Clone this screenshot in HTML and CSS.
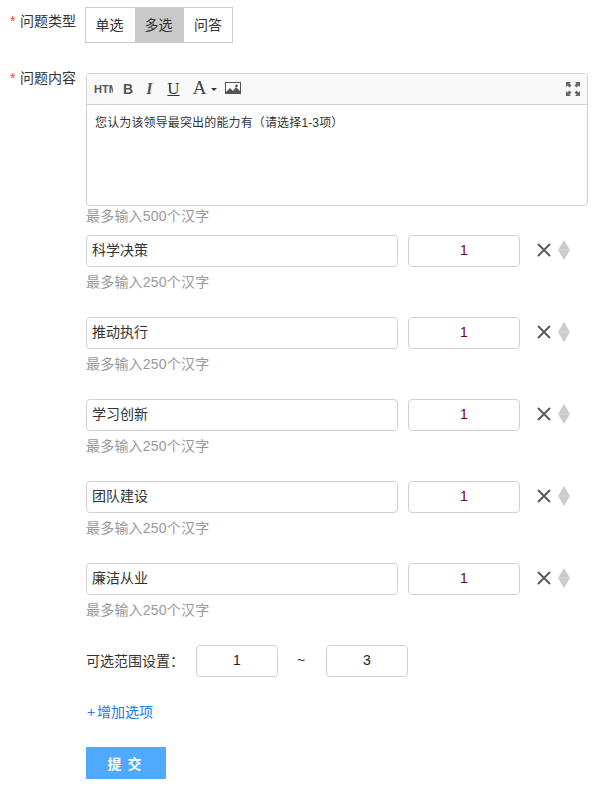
FILE: index.html
```html
<!DOCTYPE html>
<html lang="zh">
<head>
<meta charset="utf-8">
<title>问题</title>
<link rel="stylesheet" href="styles.css">
</head>
<body>
<form class="form">
  <div class="field type-field">
    <label class="label"><span class="star">*</span>问题类型</label>
    <div class="seg">
      <button type="button" class="seg-btn">单选</button>
      <button type="button" class="seg-btn active">多选</button>
      <button type="button" class="seg-btn">问答</button>
    </div>
  </div>
  <div class="field">
    <label class="label label-content"><span class="star">*</span>问题内容</label>
    <div class="body">
      <div class="editor">
        <div class="toolbar">
          <span class="tool html">HTML</span>
          <span class="tool bold">B</span>
          <span class="tool ital">I</span>
          <span class="tool under">U</span>
          <span class="tool font">A</span>
          <svg class="caret" width="6" height="3" viewBox="0 0 6 3"><path d="M0 0h6L3 3z" fill="#333"/></svg>
          <svg class="pic" width="16" height="12" viewBox="0 0 16 12"><path fill-rule="evenodd" fill="#555" d="M0 0h16v12H0zM1 1v9l4-4 3 3 3-4 4 4V1zM11.500 2.500a1.300 1.300 0 1 0 .01 0z"/></svg>
          <svg class="full" width="14" height="14" viewBox="0 0 14 14"><path fill="#666" d="M0 0h5L3.500 1.500 5.500 3.500 3.500 5.500 1.500 3.500 0 5zM14 0v5L12.500 3.500 10.500 5.500 8.500 3.500 10.500 1.500 9 0zM0 14V9L1.500 10.500 3.500 8.500 5.500 10.500 3.500 12.500 5 14zM14 14H9L10.500 12.500 8.500 10.500 10.500 8.500 12.500 10.500 14 9z"/></svg>
        </div>
        <div class="editor-text">您认为该领导最突出的能力有（请选择1-3项）</div>
      </div>
      <p class="hint hint-main">最多输入500个汉字</p>

      <div class="option">
        <div class="opt-row">
          <input class="input opt-name" value="科学决策">
          <input class="input opt-score" value="1">
          <svg class="x" width="14" height="14" viewBox="0 0 14 14"><path d="M1 1l12 12M13 1L1 13" stroke="#5c5c5c" stroke-width="2"/></svg>
          <svg class="sort" width="12" height="20" viewBox="0 0 12 20"><path fill="#ccc" d="M6 0l6 10-6 10-6-10z"/><path stroke="#ddd" d="M0 10h12"/></svg>
        </div>
        <p class="hint">最多输入250个汉字</p>
      </div>
      <div class="option">
        <div class="opt-row">
          <input class="input opt-name" value="推动执行">
          <input class="input opt-score" value="1">
          <svg class="x" width="14" height="14" viewBox="0 0 14 14"><path d="M1 1l12 12M13 1L1 13" stroke="#5c5c5c" stroke-width="2"/></svg>
          <svg class="sort" width="12" height="20" viewBox="0 0 12 20"><path fill="#ccc" d="M6 0l6 10-6 10-6-10z"/><path stroke="#ddd" d="M0 10h12"/></svg>
        </div>
        <p class="hint">最多输入250个汉字</p>
      </div>
      <div class="option">
        <div class="opt-row">
          <input class="input opt-name" value="学习创新">
          <input class="input opt-score" value="1">
          <svg class="x" width="14" height="14" viewBox="0 0 14 14"><path d="M1 1l12 12M13 1L1 13" stroke="#5c5c5c" stroke-width="2"/></svg>
          <svg class="sort" width="12" height="20" viewBox="0 0 12 20"><path fill="#ccc" d="M6 0l6 10-6 10-6-10z"/><path stroke="#ddd" d="M0 10h12"/></svg>
        </div>
        <p class="hint">最多输入250个汉字</p>
      </div>
      <div class="option">
        <div class="opt-row">
          <input class="input opt-name" value="团队建设">
          <input class="input opt-score" value="1">
          <svg class="x" width="14" height="14" viewBox="0 0 14 14"><path d="M1 1l12 12M13 1L1 13" stroke="#5c5c5c" stroke-width="2"/></svg>
          <svg class="sort" width="12" height="20" viewBox="0 0 12 20"><path fill="#ccc" d="M6 0l6 10-6 10-6-10z"/><path stroke="#ddd" d="M0 10h12"/></svg>
        </div>
        <p class="hint">最多输入250个汉字</p>
      </div>
      <div class="option">
        <div class="opt-row">
          <input class="input opt-name" value="廉洁从业">
          <input class="input opt-score" value="1">
          <svg class="x" width="14" height="14" viewBox="0 0 14 14"><path d="M1 1l12 12M13 1L1 13" stroke="#5c5c5c" stroke-width="2"/></svg>
          <svg class="sort" width="12" height="20" viewBox="0 0 12 20"><path fill="#ccc" d="M6 0l6 10-6 10-6-10z"/><path stroke="#ddd" d="M0 10h12"/></svg>
        </div>
        <p class="hint">最多输入250个汉字</p>
      </div>

      <div class="range">
        <span class="range-label">可选范围设置：</span>
        <input class="input range-input" value="1">
        <span class="tilde">~</span>
        <input class="input range-input" value="3">
      </div>
      <a class="add" href="#"><span class="plus">+</span>增加选项</a>
      <button type="button" class="submit">提 交</button>
    </div>
  </div>
</form>
</body>
</html>
```

FILE: styles.css
```css
* { box-sizing: border-box; }
html, body { margin: 0; padding: 0; background: #fff; }
body {
  font-family: "Liberation Sans", "Noto Sans CJK SC", sans-serif;
  font-size: 14px;
  color: #333;
}
.form { padding-top: 7px; }
.field { display: flex; align-items: flex-start; }
.type-field { margin-bottom: 30px; }
.label {
  width: 86px;
  flex: none;
  padding: 4px 0 0 10px;
  line-height: 20px;
  white-space: nowrap;
}
.label-content { padding-top: 0; margin-top: -5px; }
.star { color: #f44; display: inline-block; width: 10px; font-size: 14px; }
.seg {
  display: flex;
  height: 36px;
  width: 148px;
  margin-left: -1px;
  border: 1px solid #ccc;
}
.seg-btn {
  width: 49px;
  height: 34px;
  border: 0;
  padding: 0 2px 2px 0;
  background: #fff;
  color: #333;
  font: inherit;
}
.seg-btn:last-child { width: 48px; padding-right: 0; }
.seg-btn.active { background: #c9c9c9; }
.body { width: 502px; flex: none; }
.editor {
  height: 133px;
  border: 1px solid #d1d1d1;
  border-radius: 4px;
  overflow: hidden;
}
.toolbar {
  display: flex;
  align-items: center;
  height: 31px;
  background: #f9f9f9;
  border-bottom: 1px solid #d1d1d1;
  color: #444;
}
.tool { display: block; line-height: 20px; }
.html {
  width: 19px;
  margin-left: 7px;
  overflow: hidden;
  font-size: 11px;
  font-weight: 700;
  white-space: nowrap;
  color: #555;
}
.bold { margin-left: 10px; font-size: 14px; font-weight: 700; color: #555; }
.ital { margin-left: 13px; font-family: "Liberation Serif", serif; font-style: italic; font-weight: 700; font-size: 16px; color: #555; }
.under { margin-left: 15px; font-family: "Liberation Serif", serif; font-size: 17px; text-decoration: underline; color: #333; }
.font { margin-left: 13px; font-family: "Liberation Serif", serif; font-size: 19px; color: #444; margin-top: -2px; }
.caret { margin-left: 5px; }
.pic { margin-left: 8px; margin-top: -3px; }
.full { margin-left: auto; margin-right: 7px; }
.editor-text { padding: 10px 8px; font-size: 12px; line-height: 17px; color: #333; letter-spacing: .14px; }
.hint {
  margin: 5px 0 25px;
  line-height: 20px;
  font-size: 14px;
  color: #999;
  letter-spacing: .2px;
}
.hint-main { margin: 0 0 9px; }
.opt-row { display: flex; align-items: center; height: 32px; }
.input {
  height: 32px;
  border: 1px solid #d1d1d1;
  border-radius: 4px;
  padding: 0 5px 5px;
  font: inherit;
  color: #333;
  background: #fff;
  outline: none;
}
.opt-name { width: 312px; }
.opt-score { width: 112px; margin-left: 10px; padding-bottom: 2px; text-align: center; color: #800000; }
.x { margin-left: 17px; flex: none; margin-top: -2px; }
.sort { margin-left: 7px; flex: none; margin-top: -2px; }
.range { display: flex; align-items: center; height: 32px; }
.range-label { width: 110px; flex: none; padding-bottom: 2px; }
.range-input { width: 82px; padding-bottom: 2px; text-align: center; color: #222; }
.tilde { width: 46px; padding-bottom: 2px; text-align: center; margin-right: 2px; }
.add {
  display: block;
  margin-top: 25px;
  padding-left: 1px;
  line-height: 20px;
  color: #1e78f0;
  text-decoration: none;
}
.plus { display: inline-block; width: 10px; }
.submit {
  display: block;
  width: 80px;
  height: 32px;
  margin-top: 25px;
  padding: 0 2px 0 0;
  border: 0;
  background: #4ea9ff;
  color: #fff;
  font: inherit;
  font-weight: 700;
  font-size: 14px;
  letter-spacing: 1px;
}
```
